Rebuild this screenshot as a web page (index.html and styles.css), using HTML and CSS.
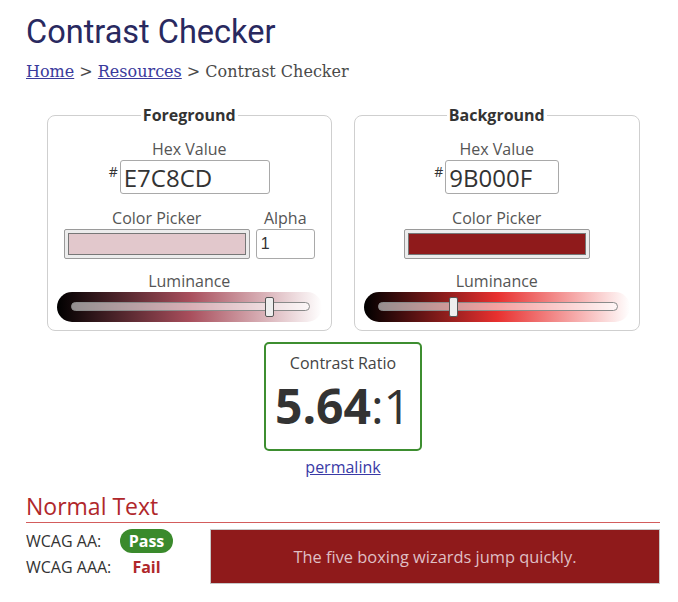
FILE: index.html
```html
<!DOCTYPE html>
<html lang="en">
<head>
<meta charset="utf-8">
<title>Contrast Checker</title>
<link rel="stylesheet" href="styles.css">
</head>
<body>
<div class="page">
  <h1 class="title">Contrast Checker</h1>
  <nav class="crumbs"><a href="#">Home</a> &gt; <a href="#">Resources</a> &gt; Contrast Checker</nav>

  <div class="pickers">
    <fieldset class="picker">
      <legend>Foreground</legend>
      <div class="label">Hex Value</div>
      <div class="hex-row"><span class="hash">#</span><input class="hex hex-fg" value="E7C8CD"></div>
      <div class="pick-row">
        <div class="col">
          <div class="label">Color Picker</div>
          <div class="swatch"><div class="swatch-fill fill-fg"></div></div>
        </div>
        <div class="col">
          <div class="label">Alpha</div>
          <input class="alpha" value="1">
        </div>
      </div>
      <div class="label lum-label">Luminance</div>
      <div class="lum lum-fg"><div class="track"><span class="thumb" style="left:83%"></span></div></div>
    </fieldset>

    <fieldset class="picker">
      <legend>Background</legend>
      <div class="label">Hex Value</div>
      <div class="hex-row"><span class="hash">#</span><input class="hex hex-bg" value="9B000F"></div>
      <div class="pick-row">
        <div class="col">
          <div class="label">Color Picker</div>
          <div class="swatch"><div class="swatch-fill fill-bg"></div></div>
        </div>
      </div>
      <div class="label lum-label">Luminance</div>
      <div class="lum lum-bg"><div class="track"><span class="thumb" style="left:31%"></span></div></div>
    </fieldset>
  </div>

  <div class="result">
    <div class="result-label">Contrast Ratio</div>
    <div class="ratio"><b>5.64</b>:1</div>
  </div>
  <div class="permalink"><a href="#">permalink</a></div>

  <h2 class="section">Normal Text</h2>
  <div class="checks">
    <div class="grades">
      <span class="glabel">WCAG AA:</span><span class="badge pass">Pass</span>
      <span class="glabel">WCAG AAA:</span><span class="badge fail">Fail</span>
    </div>
    <div class="sample">The five boxing wizards jump quickly.</div>
  </div>
</div>
</body>
</html>
```

FILE: styles.css
```css
* { box-sizing: border-box; }
html, body { margin: 0; padding: 0; background: #fff; }
body { font-family: "Open Sans", "Liberation Sans", sans-serif; font-size: 16px; color: #333; }

.page { padding: 12px 18px 0 26px; width: 678px; }

.title {
  margin: 0;
  font-family: Roboto, "Liberation Sans", sans-serif;
  font-weight: 400;
  font-size: 32.5px;
  line-height: 40px;
  color: #29295f;
}

.crumbs {
  margin-top: 10px;
  font-family: "DejaVu Serif", "Liberation Serif", serif;
  font-size: 16px;
  line-height: 20px;
  color: #4a4a4a;
}
.crumbs a { color: #3a3a9c; }

.pickers {
  margin: 22px auto 0;
  width: 593px;
  display: grid;
  grid-template-columns: 1fr 1fr;
  gap: 22px;
}

.picker {
  margin: 0;
  min-width: 0;
  border: 1px solid #cfcfcf;
  border-radius: 8px;
  padding: 12px 9px 8px;
}
.picker legend {
  margin: 0 auto;
  padding: 0 2px;
  font-weight: 700;
  font-size: 16px;
  line-height: 22px;
  color: #333;
}

.label {
  text-align: center;
  font-size: 16px;
  line-height: 22px;
  color: #555;
}

.hex-row { display: flex; justify-content: center; align-items: flex-start; }
.hash { font-size: 14px; line-height: 14px; margin-top: 5px; margin-right: 2px; color: #333; }
.hex {
  height: 34px;
  border: 1px solid #a9a9a9;
  border-radius: 3px;
  padding: 0 3px;
  font-family: "Open Sans", sans-serif;
  font-size: 24px;
  color: #333;
  background: #fff;
  outline: none;
}
.hex-fg { width: 150px; }
.hex-bg { width: 114px; }

.pick-row { display: flex; justify-content: center; gap: 6px; margin-top: 13px; }
.col { display: flex; flex-direction: column; align-items: center; }

.swatch {
  width: 186px;
  height: 30px;
  border: 1px solid #9a9a9a;
  border-radius: 2px;
  background: #ececec;
  padding: 3px;
}
.swatch-fill { width: 100%; height: 100%; border: 1px solid #777; }
.fill-fg { background: #e2c8cc; }
.fill-bg { background: #8f1a1b; }

.alpha {
  width: 59px;
  height: 30px;
  border: 1px solid #a9a9a9;
  border-radius: 3px;
  padding: 0 4px;
  font-family: "Liberation Sans", Arial, sans-serif;
  font-size: 16px;
  color: #333;
  background: #fff;
  outline: none;
}

.lum-label { margin-top: 11px; }
.lum {
  height: 30px;
  border-radius: 15px;
  padding: 10px 12px 0 14px;
}
.lum-fg { background: linear-gradient(to right, #000 0%, #a84e5c 50%, #fff 100%); }
.lum-bg { background: linear-gradient(to right, #000 0%, #e8302f 50%, #fff 100%); }

.track {
  position: relative;
  height: 9px;
  border: 1px solid #8a8a8a;
  border-radius: 5px;
  background: rgba(255, 255, 255, 0.55);
}
.thumb {
  position: absolute;
  top: -6px;
  width: 9px;
  height: 20px;
  margin-left: -4px;
  background: #eee;
  border: 1px solid #555;
  border-radius: 2px;
}

.result {
  margin: 11px auto 0;
  width: 158px;
  border: 2px solid #3d8e30;
  border-radius: 5px;
  padding: 8px 0 15px;
  text-align: center;
}
.result-label { font-size: 16px; line-height: 22px; color: #444; }
.ratio { margin-top: 4px; font-size: 48px; line-height: 56px; color: #333; }
.ratio b { font-weight: 700; }

.permalink { margin-top: 5px; text-align: center; line-height: 22px; }
.permalink a { color: #3a3aa6; }

.section {
  margin: 12px 0 0;
  font-weight: 400;
  font-size: 23px;
  line-height: 32px;
  color: #b0272b;
  border-bottom: 1px solid #d35c5c;
}

.checks { display: flex; margin-top: 6px; }
.grades {
  flex: 0 0 184px;
  display: grid;
  grid-template-columns: 94px 53px;
  grid-auto-rows: 24px;
  row-gap: 2px;
  align-content: start;
  align-items: center;
}
.glabel { font-size: 16px; color: #333; line-height: 22px; }
.badge { text-align: center; font-weight: 700; font-size: 16px; line-height: 24px; }
.pass { background: #3a8a2c; color: #fff; border-radius: 12px; }
.fail { color: #b0272b; }

.sample {
  flex: 1;
  height: 55px;
  background: #8f1a1b;
  border: 1px solid #c8c8c8;
  color: #dfbfc4;
  display: flex;
  align-items: center;
  justify-content: center;
  font-size: 16.4px;
}
```
